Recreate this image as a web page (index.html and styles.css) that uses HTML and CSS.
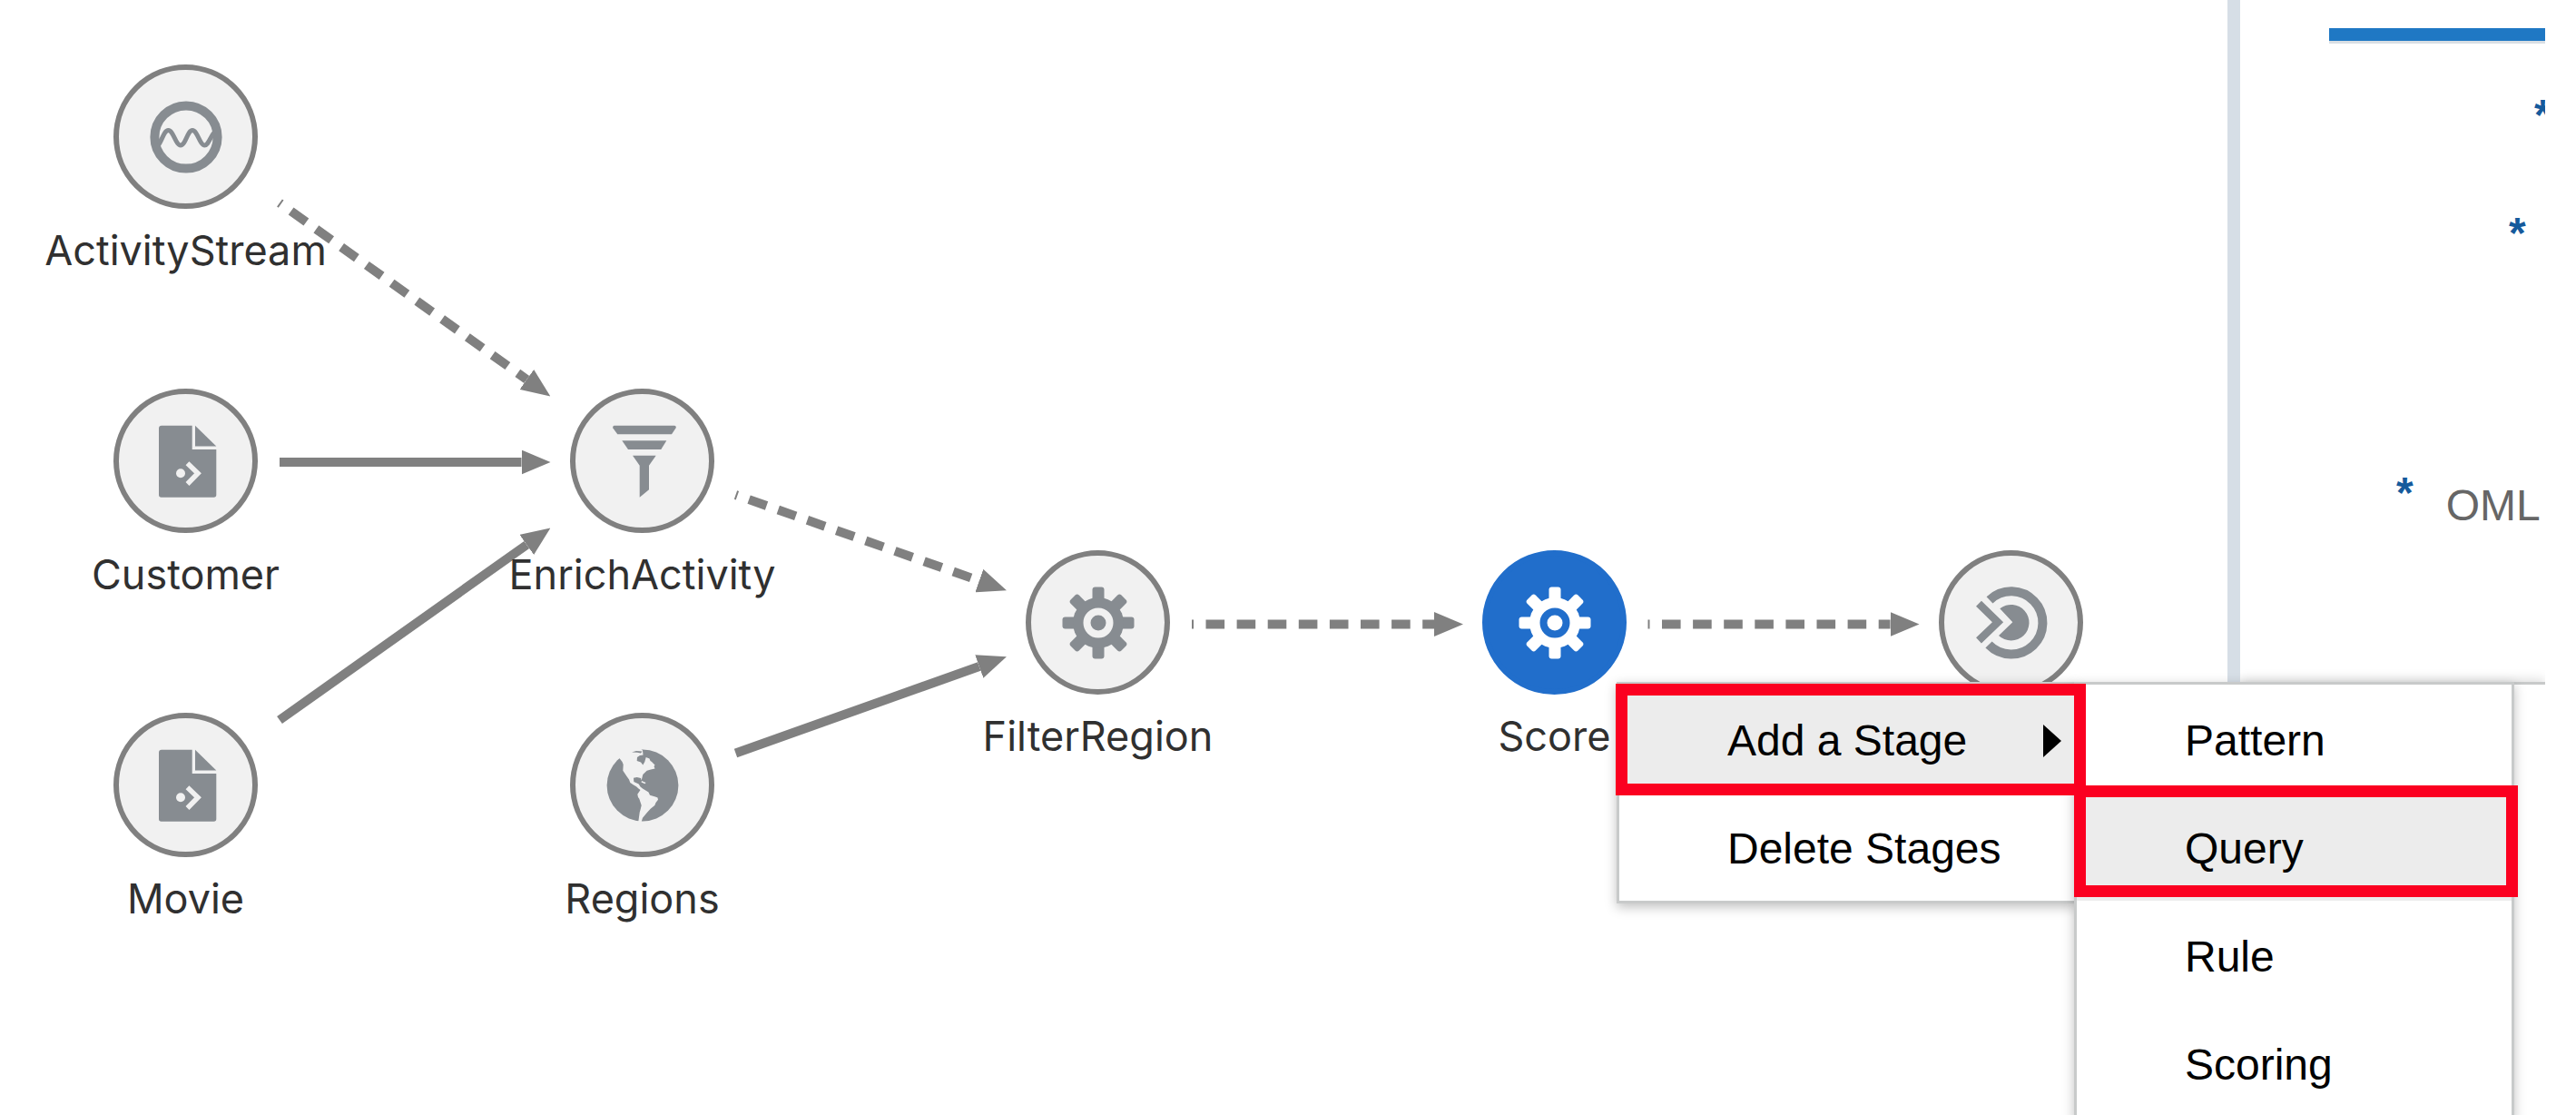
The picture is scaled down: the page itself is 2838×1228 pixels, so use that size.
FILE: index.html
```html
<!DOCTYPE html>
<html lang="en">
<head>
<meta charset="utf-8">
<title>Pipeline Editor</title>
<link rel="stylesheet" href="styles.css">
</head>
<body>
<svg class="defs" aria-hidden="true">
  <defs>
    <marker id="arrowhead" markerUnits="userSpaceOnUse" markerWidth="32" markerHeight="27" refX="0" refY="13.5" orient="auto">
      <path d="M0 0L32 13.5L0 27Z" fill="#808080"/>
    </marker>
    <symbol id="icon-file" viewBox="0 0 80 80">
      <path fill="#878c91" d="M13 .7H46.7V27H73.3V77a2.7 2.7 0 0 1-2.7 2.7H12.700a2.700 2.700 0 0 1-2.700-2.700V3.700A3 3 0 0 1 13 .7Z"/>
      <path fill="#878c91" d="M50 .7L73.300 23.500H50Z"/>
      <circle cx="34" cy="53.300" r="5" fill="#f1f1f1"/>
      <path d="M41.500 42.300L53 53.300L41.500 65" fill="none" stroke="#f1f1f1" stroke-width="5.500"/>
    </symbol>
    <symbol id="icon-gear" viewBox="0 0 80 80">
      <g fill="currentColor">
        <rect x="33.500" y=".5" width="13" height="79" rx="3"/>
        <rect x="33.500" y=".5" width="13" height="79" rx="3" transform="rotate(45 40 40)"/>
        <rect x="33.500" y=".5" width="13" height="79" rx="3" transform="rotate(90 40 40)"/>
        <rect x="33.500" y=".5" width="13" height="79" rx="3" transform="rotate(135 40 40)"/>
        <circle cx="40" cy="40" r="28"/>
      </g>
      <circle cx="40" cy="40" r="12.500" fill="none" stroke="var(--disc)" stroke-width="8"/>
    </symbol>
  </defs>
</svg>

<main class="workspace">
  <section class="canvas" aria-label="Pipeline">
    <svg class="edges" aria-hidden="true">
      <path class="edge edge-dashed" d="M308 223.500L580.300 418"/>
      <path class="edge" d="M308 509H574.500"/>
      <path class="edge" d="M308 793L580.300 600"/>
      <path class="edge edge-dashed" d="M810.500 545L1078.800 639.600"/>
      <path class="edge" d="M810.500 829.500L1078.800 734"/>
      <path class="edge edge-dashed" d="M1313 687.500H1580"/>
      <path class="edge edge-dashed" d="M1815.500 687.500H2082.500"/>
    </svg>

    <div class="node col-1 row-1">
      <div class="disc">
        <svg class="icon" viewBox="0 0 80 80">
          <circle cx="40" cy="40" r="34.600" fill="none" stroke="#878c91" stroke-width="10"/>
          <path d="M10 48C14 42 16 32.500 20.500 32.500C26 32.500 28.500 49 34 49C39.500 49 41.500 32.500 47 32.500C52.500 32.500 55 49 60.500 49C64.500 49 66.500 40 71 35" fill="none" stroke="#878c91" stroke-width="5"/>
        </svg>
      </div>
      <span class="label">ActivityStream</span>
    </div>
    <div class="node col-1 row-3">
      <div class="disc"><svg class="icon"><use href="#icon-file"/></svg></div>
      <span class="label">Customer</span>
    </div>
    <div class="node col-1 row-5">
      <div class="disc"><svg class="icon"><use href="#icon-file"/></svg></div>
      <span class="label">Movie</span>
    </div>
    <div class="node col-2 row-3">
      <div class="disc">
        <svg class="icon" viewBox="0 0 80 80">
          <g fill="#878c91">
            <path d="M8.500 .7H75.200Q77.500 1.500 76.500 3.500L72 10.300H12.300L7.300 3.500Q6.500 1.500 8.500 .7Z"/>
            <path d="M17.300 17.300H66.300L60.300 27H24Z"/>
            <path d="M29 33.700H54.700L47 44.700V71.300L36.700 79.700V44.700Z"/>
          </g>
        </svg>
      </div>
      <span class="label">EnrichActivity</span>
    </div>
    <div class="node col-2 row-5">
      <div class="disc">
        <svg class="icon" viewBox="0 0 80 80">
          <circle cx="40" cy="40" r="39.400" fill="#878c91"/>
          <path fill="#f1f1f1" d="M14 9.500L17.500 14L18.700 17L18.300 23.700L20.500 27L22.300 29.700L25 33.500L26.300 37L30 39.500L33 41.300L35.500 43.500L37.500 45L34.300 49.700L35 53L36.300 54.700L38.700 62L37.500 67L36.700 69.700L35.300 80H38.700L40 75.700L45 69.700L48.700 65.700L53.300 62L54.500 59L57 55.700L56.500 53.500L54.700 52.700L48 50.700L46.500 47.500L43.700 45.700L40 43.500L37.500 41.500L35.700 38.500L33 37.300L30.300 36L30 31.700L33.700 31L38 32L38.700 34.500L39.300 32L40.300 28L44.700 23.700L49 22.500L53.500 21.500L52.500 19L53.500 17.500L50 14L48.500 13L47.500 10.500L43.700 9L42.300 14L40.300 17.500L38 14.500L33.700 13L34 9L37 7L40.500 6.500L40 1.500L37 -1H20L10 6Z"/>
          <path fill="#878c91" d="M28 3.500L33 2L39.500 2.500L38 4.500L34 3.700Z"/>
          <path fill="#f1f1f1" d="M39 35L43.500 37L42.500 38.200L38.500 36.500Z"/>
        </svg>
      </div>
      <span class="label">Regions</span>
    </div>
    <div class="node col-3 row-4">
      <div class="disc"><svg class="icon"><use href="#icon-gear"/></svg></div>
      <span class="label">FilterRegion</span>
    </div>
    <div class="node node-selected col-4 row-4">
      <div class="disc"><svg class="icon"><use href="#icon-gear"/></svg></div>
      <span class="label">Score</span>
    </div>
    <div class="node col-5 row-4">
      <div class="disc">
        <svg class="icon" viewBox="0 0 80 80">
          <path d="M16 14.800A34.600 34.600 0 1 1 15 64" fill="none" stroke="#878c91" stroke-width="10"/>
          <path d="M27.300 24.300A19.800 19.800 0 1 1 26 54L41.300 39.300Z" fill="#878c91"/>
          <path d="M4 18.700L25 39.300L4 59.300" fill="none" stroke="#878c91" stroke-width="8.500"/>
        </svg>
      </div>
    </div>

    <ul class="menu">
      <li class="menu-entry">
        <button class="menu-item is-active is-marked" type="button" aria-haspopup="true" aria-expanded="true">Add a Stage<span class="caret"></span></button>
        <ul class="menu submenu">
          <li class="menu-entry"><button class="menu-item" type="button">Pattern</button></li>
          <li class="menu-entry"><button class="menu-item is-active is-marked" type="button">Query</button></li>
          <li class="menu-entry"><button class="menu-item" type="button">Rule</button></li>
          <li class="menu-entry"><button class="menu-item" type="button">Scoring</button></li>
        </ul>
      </li>
      <li class="menu-entry"><button class="menu-item" type="button">Delete Stages</button></li>
    </ul>
  </section>

  <div class="splitter"></div>

  <aside class="panel">
    <div class="fields">
      <div class="tab-bar"></div>
      <div class="field field-short"><span class="required">*</span></div>
      <div class="field field-medium"><span class="required">*</span></div>
      <div class="field field-long"><span class="required">*</span><span class="field-label">OML</span></div>
    </div>
    <div class="output"></div>
  </aside>
</main>
</body>
</html>
```

FILE: styles.css
```css
*,
*::after {
  box-sizing: border-box;
}

body {
  margin: 0;
  background: #fff;
  font-family: "Liberation Sans", Arial, sans-serif;
}

.defs {
  position: absolute;
  width: 0;
  height: 0;
}

.workspace {
  display: flex;
  height: 100vh;
  overflow: hidden;
}

/* Diagram canvas */
.canvas {
  position: relative;
  z-index: 1;
  flex: 1;
  min-width: 0;
}

.edges {
  position: absolute;
  inset: 0;
  width: 100%;
  height: 100%;
}

.edge {
  fill: none;
  stroke: #808080;
  stroke-width: 10;
  marker-end: url(#arrowhead);
}

.edge-dashed {
  stroke-dasharray: 20.6 13.5;
  stroke-dashoffset: 18.6;
}

.node {
  --disc: #f1f1f1;
  position: absolute;
  display: flex;
  flex-direction: column;
  align-items: center;
  gap: 16px;
  width: 159px;
  color: #878c91;
}

.col-1 { left: 125px; }
.col-2 { left: 628px; }
.col-3 { left: 1130px; }
.col-4 { left: 1633px; }
.col-5 { left: 2136px; }

.row-1 { top: 71px; }
.row-3 { top: 428px; }
.row-4 { top: 606px; }
.row-5 { top: 785px; }

.disc {
  display: flex;
  align-items: center;
  justify-content: center;
  width: 159px;
  height: 159px;
  border: 6px solid #808080;
  border-radius: 50%;
  background: var(--disc);
}

.icon {
  width: 80px;
  height: 80px;
  overflow: visible;
}

.label {
  color: #303030;
  font: 45px/60px Inter, "Noto Sans", sans-serif;
  white-space: nowrap;
}

.node-selected {
  --disc: #216ecb;
  color: #fff;
}

.node-selected .disc {
  border-color: #216ecb;
}

/* Context menu */
.menu {
  position: absolute;
  top: 751px;
  left: 1781px;
  width: 507px;
  margin: 0;
  padding: 0;
  border: 3px solid #c8caca;
  background: #fff;
  box-shadow: 0 4px 12px rgba(0, 0, 0, 0.25);
  list-style: none;
}

.menu-entry {
  position: static;
}

.submenu {
  top: -3px;
  left: 501px;
  z-index: 1;
  width: 485px;
}

.menu-item {
  position: relative;
  display: flex;
  align-items: center;
  justify-content: space-between;
  width: 100%;
  height: 119px;
  padding: 4px 14px 0 119px;
  border: 0;
  background: none;
  color: #000;
  font: 48px/56px "Liberation Sans", Arial, sans-serif;
  text-align: left;
}

.is-active {
  background: #ececec;
}

/* Red callout frame around the step to follow */
.is-marked::after {
  content: "";
  position: absolute;
  z-index: 2;
  top: -1px;
  left: -4px;
  width: 518px;
  height: 123px;
  border: 13px solid #fb0020;
}

.is-marked {
  z-index: 2;
}

.submenu .is-marked::after {
  top: -8px;
  left: -3px;
  width: 489px;
}

.caret {
  border: solid transparent;
  border-width: 18px 0 18px 20px;
  border-left-color: #000;
}

/* Divider and properties panel */
.splitter {
  flex: none;
  width: 14px;
  background: #d6dee6;
}

.panel {
  display: flex;
  flex: none;
  flex-direction: column;
  width: 370px;
  padding-right: 34px;
}

.fields {
  flex: none;
  height: 751px;
  padding-top: 31px;
  overflow: hidden;
}

.tab-bar {
  height: 17px;
  margin-left: 98px;
  border-bottom: 3px solid #d9dfe4;
  background: #1f78c4;
}

.field {
  display: flex;
  gap: 36px;
  font-size: 48px;
  line-height: 56px;
}

.field-short {
  margin-top: 51px;
  padding-left: 324px;
}

.field-medium {
  margin-top: 74px;
  padding-left: 296px;
}

.field-long {
  margin-top: 230px;
  padding-left: 172px;
}

.required {
  color: #155a9c;
  font-weight: 700;
}

.field-label {
  padding-top: 14px;
  color: #666;
}

.output {
  flex: 1;
  border-top: 3px solid #c8caca;
  box-shadow: 0 -2px 12px rgba(0, 0, 0, 0.15);
  clip-path: inset(-20px 0 0 0);
}
```
